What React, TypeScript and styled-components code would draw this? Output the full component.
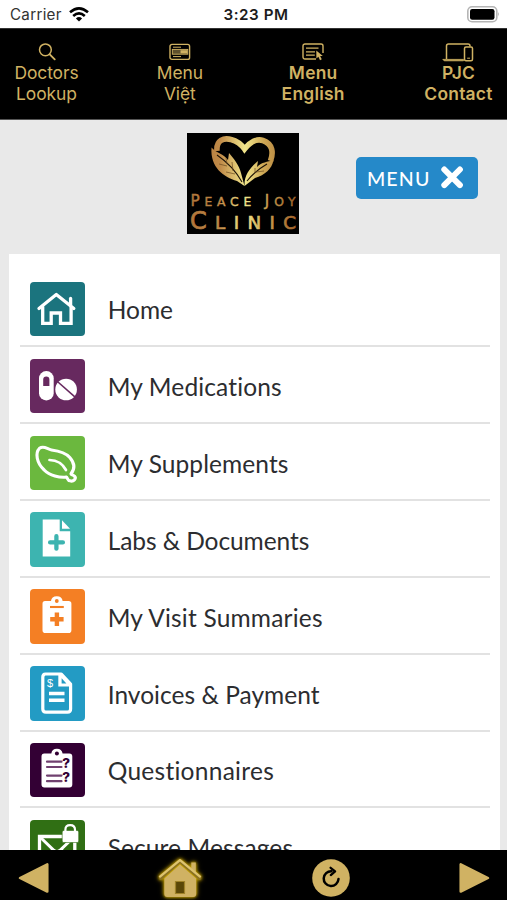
import React from "react";
import styled, { createGlobalStyle } from "styled-components";

const GOLD = "#d0b263";

const GlobalStyle = createGlobalStyle`
  * { box-sizing: border-box; }
  html, body { margin: 0; padding: 0; overflow: hidden; }
  body { background: #e9e9e9; }
  svg { display: block; flex: none; }
`;

const Screen = styled.div`
  width: 507px;
  height: 900px;
  display: flex;
  flex-direction: column;
  overflow: hidden;
  background: #e9e9e9;
  font-family: Lato, sans-serif;
`;

const StatusBar = styled.header`
  flex: none;
  height: 28px;
  padding: 1px 7px 0 10px;
  display: grid;
  grid-template-columns: 1fr auto 1fr;
  align-items: center;
  background: #fff;
  color: #1c1c1c;
  font-family: Inter, sans-serif;
  font-size: 15.2px;
`;

const Carrier = styled.div`
  display: flex;
  align-items: center;
  gap: 7px;
  color: #333;
  letter-spacing: 0.28px;
`;

const Clock = styled.div`
  padding-right: 1px;
  font-weight: 600;
  letter-spacing: 0.55px;
  margin-right: -3px;
`;

const BatterySlot = styled.div`
  display: flex;
  justify-content: flex-end;
`;

const TopNav = styled.nav`
  flex: none;
  height: 92px;
  padding: 14px 14px 0 15px;
  display: flex;
  justify-content: space-between;
  background: #000;
  border-top: 1px solid #333;
  border-bottom: 1px solid #555;
`;

const NavItem = styled.div<{ $width: number; $bold?: boolean }>`
  width: ${(p) => p.$width}px;
  display: flex;
  flex-direction: column;
  align-items: center;
  color: ${GOLD};
  font-family: Inter, sans-serif;
  font-size: 17.4px;
  font-weight: ${(p) => (p.$bold ? 600 : 400)};
  letter-spacing: ${(p) => (p.$bold ? 0.25 : -0.05)}px;
  line-height: 21.3px;
  text-align: center;
  white-space: nowrap;
`;

const NavIcon = styled.div`
  height: 19px;
`;

const Brand = styled.div`
  flex: none;
  height: 134px;
  padding: 13px 29.5px 0 0;
  display: grid;
  grid-template-columns: 186.5px 1fr auto;
  align-items: start;
`;

const LogoCell = styled.div`
  grid-column: 2;
`;

const MenuButton = styled.button`
  width: 121.5px;
  height: 42px;
  margin-top: 24px;
  padding: 0 13.5px 0 11px;
  display: flex;
  align-items: center;
  justify-content: space-between;
  border: 0;
  border-radius: 5px;
  background: #2589c9;
  color: #fff;
  font-family: Lato, sans-serif;
  font-size: 19.6px;
  font-weight: 500;
  letter-spacing: 1.1px;
`;

const Panel = styled.main`
  flex: 1;
  min-height: 0;
  margin: 0 7px 0 9px;
  padding: 16.5px 10.5px 0 11px;
  overflow: hidden;
  background: #fff;
`;

const Row = styled.div`
  height: 76.85px;
  padding: 0 0 9px 10.3px;
  display: flex;
  align-items: flex-end;
  border-bottom: 2px solid #e2e2e2;
`;

const Tile = styled.div<{ $color: string }>`
  width: 54.4px;
  height: 54.4px;
  flex: none;
  border-radius: 4px;
  background: ${(p) => p.$color};
`;

const Label = styled.span<{ $spacing: number }>`
  margin-left: 23px;
  height: 54px;
  line-height: 56px;
  color: #2c2d30;
  font-size: 24.5px;
  letter-spacing: ${(p) => p.$spacing}px;
  white-space: nowrap;
`;

const BottomBar = styled.footer`
  flex: none;
  height: 50px;
  padding: 5px 17px 0 18px;
  display: flex;
  align-items: center;
  justify-content: space-between;
  background: #000;
`;

const Glow = styled.div`
  filter: drop-shadow(0 0 1.5px #c9a400) drop-shadow(0 0 2px #a88a00);
`;

const Wifi = () => (
  <svg width="20" height="15" viewBox="0 0 20 15" fill="none" stroke="#000" strokeWidth="2.6">
    <path d="M1 5.3Q10-2.5 19 5.3" />
    <path d="M4.2 8.9Q10 3.8 15.8 8.9" />
    <path d="M6.9 11.4Q10 8.7 13.1 11.4L10 14.5Z" fill="#000" stroke="none" />
  </svg>
);

const Battery = () => (
  <svg width="33" height="17" viewBox="0 0 33 17">
    <rect x="0.8" y="0.8" width="29" height="15" rx="4.3" fill="#fff" stroke="#b5b5b5" strokeWidth="1.6" />
    <rect x="3" y="3" width="24.5" height="10.8" rx="2.2" fill="#000" />
    <path d="M31.2 6q1.6 2.3 0 4.6Z" fill="#999" />
  </svg>
);

const SearchIcon = () => (
  <svg width="18" height="18" viewBox="0 0 18 18" fill="none" stroke={GOLD} strokeWidth="1.5">
    <circle cx="7.4" cy="6.8" r="5.9" />
    <path d="m11.7 11.3 5 5" strokeWidth="1.9" strokeLinecap="round" />
  </svg>
);

const CardIcon = () => (
  <svg width="22" height="18" viewBox="0 0 22 18" fill="none" stroke={GOLD} strokeWidth="1.4">
    <rect x="1" y="1.4" width="19.6" height="15" rx="2" />
    <rect x="3.3" y="6.4" width="15.5" height="4.8" fill={GOLD} fillOpacity=".45" strokeWidth=".9" />
    <path d="M4 4.2h8M4 13.6h8" strokeWidth="1" />
    <path d="M11.5 8.8h7" strokeWidth="3.2" />
  </svg>
);

const ListCursorIcon = () => (
  <svg width="22" height="18" viewBox="0 0 22 18" fill="none" stroke={GOLD} strokeWidth="1.4">
    <path d="M14 16H3a2 2 0 0 1-2-2V3a2 2 0 0 1 2-2h16a2 2 0 0 1 2 2v7" />
    <path d="M4 5.2h12.5M4 8.8h9M4 12.2h8.8" strokeWidth="1.2" />
    <path d="m14.3 7.6.1 8 2-1.8 1.6 3.4 1.8-.9-1.7-3.2 2.7-.2Z" fill={GOLD} stroke="none" />
  </svg>
);

const DevicesIcon = () => (
  <svg width="32" height="19" viewBox="0 0 32 19" fill="none" stroke={GOLD} strokeWidth="1.5">
    <path d="M4.5 16V3a2 2 0 0 1 2-2H26a2 2 0 0 1 2 2v.4" />
    <path d="M.8 16.4h20.7v1.4H2.2Z" fill={GOLD} strokeWidth=".8" />
    <rect x="22.5" y="3.9" width="8" height="13.8" rx="1.5" />
    <path d="M25.2 15.2h2.8" strokeWidth="1" />
  </svg>
);

const Logo = () => (
  <svg width="112" height="101" viewBox="0 0 112 101">
    <defs>
      <linearGradient id="gold" gradientUnits="userSpaceOnUse" x1="4" x2="108" y1="0" y2="0">
        <stop offset="0" stopColor="#b0753a" />
        <stop offset=".28" stopColor="#c08a48" />
        <stop offset=".52" stopColor="#f2e78c" />
        <stop offset=".7" stopColor="#cda654" />
        <stop offset="1" stopColor="#a3652b" />
      </linearGradient>
    </defs>
    <rect width="112" height="101" fill="#000" />
    <path
      d="M30 18C29 7 37 4.5 44 6.5C50 8 54 11 57.5 16C63 9 70 5.5 76 7.5C86 11 86.5 20 83.5 28"
      fill="none"
      stroke="url(#gold)"
      strokeWidth="5.6"
    />
    <path
      d="M24.5 14.5C29 20 37 21 41 27L42 20C47 26 52 32 54 40L57.5 53L50 48C37 44 23 35 24.5 14.5Z"
      fill="url(#gold)"
    />
    <path
      d="M57.5 53C57 42 63 35 71 28L70 34C75 29 80 29 86.5 27C85 36 78 42 68 45Z"
      fill="url(#gold)"
    />
    <path
      d="M30 22Q46 33 55 49M60 48Q68 38 80 31"
      fill="none"
      stroke="#1c1206"
      strokeWidth="1.1"
    />
    <path
      d="M40 31l-1-6M46 38l-1-9M40 33l-8-2M48 41l-9-2M68 40v-5M69 39l8-1"
      fill="none"
      stroke="#6b4a20"
      strokeWidth=".7"
    />
    <g fill="url(#gold)" stroke="url(#gold)" strokeWidth=".4" fontFamily="DejaVu Sans, sans-serif">
      <text y="73" textLength="105" lengthAdjust="spacing" x="3.5" fontSize="12.3">
        <tspan fontSize="15.2">P</tspan>EACE <tspan fontSize="15.2">J</tspan>OY
      </text>
      <text y="96" textLength="106" lengthAdjust="spacing" x="3" fontSize="18.3" strokeWidth=".7">
        <tspan fontSize="24">C</tspan>LINIC
      </text>
    </g>
  </svg>
);

const CloseIcon = () => (
  <svg width="24" height="24" viewBox="0 0 24 24" stroke="#fff" strokeWidth="6" strokeLinecap="round">
    <path d="m4.3 3.5 15.6 15.6M19.9 3.5 4.3 19.1" />
  </svg>
);

const TileSvg = ({ children }: { children: React.ReactNode }) => (
  <svg width="54" height="54" viewBox="0 0 54 54" fill="none">
    {children}
  </svg>
);

const HomeGlyph = () => (
  <TileSvg>
    <g stroke="#fff" strokeWidth="3.3" strokeLinejoin="round" strokeLinecap="round">
      <path d="m9 26.5 17.3-14 17.5 14" />
      <path d="M12.7 25v16.4h8.5V31h9.3v10.4h10.6V25" strokeLinejoin="miter" />
      <path d="M40.6 16.5v6" />
    </g>
  </TileSvg>
);

const PillsGlyph = () => (
  <TileSvg>
    <rect x="9" y="12" width="14.7" height="29.5" rx="7.3" fill="#fff" />
    <path d="M13.2 27v-6.3a3 3 0 0 1 6.2 0V27Z" fill="#67295f" />
    <circle cx="36.1" cy="30.5" r="10.8" fill="#fff" />
    <path d="m27.4 22.5 18 15.8" stroke="#67295f" strokeWidth="1.6" />
  </TileSvg>
);

const LeafGlyph = () => (
  <TileSvg>
    <g stroke="#fff" strokeWidth="3.1" strokeLinecap="round" strokeLinejoin="round">
      <path d="M9.5 12.3C5 17 6.5 27 14.2 34C19.5 39.5 30 42 36.2 41.1C37.8 41.6 37.2 44.8 40 44.8C43.5 46 46.8 42.5 44.5 40.2C43.5 39 41.6 39.2 41 37.8C45 33 44.5 27 39.8 21.5C35 16 27.5 14.8 21.5 14C17 13.3 14 9 9.5 12.3Z" />
      <path d="M19.5 24C27 24.3 32 26.5 36 34" strokeWidth="2.7" />
    </g>
  </TileSvg>
);

const DocumentGlyph = () => (
  <TileSvg>
    <path d="M12.7 7.5h17v11.8h10.5v25.2H12.7Z" fill="#fff" />
    <path d="M32 8.3 40 16.8H32Z" fill="#fff" />
    <path d="M26.4 24.2v12.5M20.1 30.4h12.8" stroke="#3db4b0" strokeWidth="4.3" strokeLinecap="round" />
  </TileSvg>
);

const ClipboardPlusGlyph = () => (
  <TileSvg>
    <path d="M15 12h6q.5-4.8 5.8-4.8T32.6 12h6q2.8 0 2.8 2.8v26.5q0 2.8-2.8 2.8H15.3q-2.8 0-2.8-2.8V14.8q0-2.8 2.5-2.8Z" fill="#fff" />
    <circle cx="26.8" cy="12" r="1.9" fill="#f47f24" />
    <path d="M20 18h13.8" stroke="#f47f24" strokeWidth="2.1" />
    <path d="M26.9 23.6V37M20.2 30.3h13.4" stroke="#f47f24" strokeWidth="4.4" />
  </TileSvg>
);

const InvoiceGlyph = () => (
  <TileSvg>
    <path d="M15.5 8h15.8l9.3 10.2v24.7q0 3.2-3.2 3.2H16q-3.2 0-3.2-3.2V11.3q0-3.3 2.7-3.3Z" stroke="#fff" strokeWidth="3.2" strokeLinejoin="round" />
    <path d="M28.3 8h3l9.2 10.2v2.4H28.3Z" fill="#fff" />
    <path d="m31.6 12.2 4.8 5.3h-4.8Z" fill="#239bc4" />
    <path d="M19 27.5h15.5M19 34.2h15.5" stroke="#fff" strokeWidth="3.4" />
    <text x="17" y="20.7" fill="#fff" fontFamily="Liberation Sans, sans-serif" fontSize="11">$</text>
  </TileSvg>
);

const QuestionsGlyph = () => (
  <TileSvg>
    <path d="M14.3 10.4h7q.6-4.7 5.6-4.7t5.7 4.7h6.7q3 0 3 3v28.2q0 3-3 3H14.5q-3 0-3-3V13.4q0-3 2.8-3Z" fill="#fff" />
    <circle cx="26.9" cy="10.4" r="2" fill="#330034" />
    <path d="M17 18.7h14.5M17 24h14.5M17 32.6h14.5M17 38.2h14.5" stroke="#70406f" strokeWidth="2.2" strokeLinecap="round" />
    <g fill="#330034" fontFamily="Inter, sans-serif" fontSize="13.5" fontWeight="800">
      <text x="32.3" y="24.8">?</text>
      <text x="32.3" y="39.3">?</text>
    </g>
  </TileSvg>
);

const SecureMailGlyph = () => (
  <TileSvg>
    <path d="M9.5 16.5h35.3v27H9.5Z" stroke="#fff" strokeWidth="3.3" />
    <path d="m10 17 13.8 13.3q3.1 2.4 6.2 0L44 17M10 43l12.5-13M44 43 31.5 30" stroke="#fff" strokeWidth="3" />
    <rect x="32.2" y="10.5" width="16.5" height="12" rx="1.5" fill="#fff" stroke="#306f14" strokeWidth=".6" />
    <path d="M35.4 11.5V9.8q0-4.7 4.8-4.7T45 9.8v1.7" stroke="#fff" strokeWidth="2.2" />
  </TileSvg>
);

const BackIcon = () => (
  <svg width="31" height="32" viewBox="0 0 31 32">
    <path d="M2 16 29.3 2.3v27.3Z" fill={GOLD} stroke={GOLD} strokeWidth="2.5" strokeLinejoin="round" />
  </svg>
);

const ForwardIcon = () => (
  <svg width="31" height="32" viewBox="0 0 31 32">
    <path d="M29 16 1.7 2.3v27.3Z" fill={GOLD} stroke={GOLD} strokeWidth="2.5" strokeLinejoin="round" />
  </svg>
);

const HouseIcon = () => (
  <svg width="44" height="40" viewBox="0 0 44 40">
    <path d="M6.3 20.5 22 6.5l16.2 14V36q0 3-3 3H9.3q-3 0-3-3Z" fill={GOLD} />
    <path d="M33.3 4.5h4.5v12l-4.5-4Z" fill={GOLD} />
    <path d="M2.6 20.2 22 3.4l19.6 16.8" fill="none" stroke="#8b7220" strokeWidth="3.2" strokeLinejoin="round" strokeLinecap="round" />
    <path d="M2 18.6 22 2.2l20 16.4" fill="none" stroke="#ddc36f" strokeWidth="2.3" strokeLinejoin="round" strokeLinecap="round" />
    <path d="M17.5 23.5h9v12h-9Z" fill="#5b4707" stroke="#9f8228" strokeWidth="1.2" />
  </svg>
);

const RefreshIcon = () => (
  <svg width="38" height="38" viewBox="0 0 38 38">
    <circle cx="19" cy="19" r="18.8" fill={GOLD} />
    <path d="M19.5 12.2A7.4 7.4 0 1 0 26.5 20" fill="none" stroke="#000" strokeWidth="2.5" strokeLinecap="round" />
    <path d="m18.6 8.8 4.5 3.5-4.3 3.8" fill="none" stroke="#000" strokeWidth="2.3" strokeLinejoin="round" strokeLinecap="round" />
  </svg>
);

const entries = [
  { label: "Home", color: "#1b747e", Glyph: HomeGlyph, spacing: 0 },
  { label: "My Medications", color: "#67295f", Glyph: PillsGlyph, spacing: 0.13 },
  { label: "My Supplements", color: "#6bb83e", Glyph: LeafGlyph, spacing: 0.08 },
  { label: "Labs & Documents", color: "#3db4b0", Glyph: DocumentGlyph, spacing: -0.08 },
  { label: "My Visit Summaries", color: "#f47f24", Glyph: ClipboardPlusGlyph, spacing: 0.2 },
  { label: "Invoices & Payment", color: "#239bc4", Glyph: InvoiceGlyph, spacing: 0.03 },
  { label: "Questionnaires", color: "#330034", Glyph: QuestionsGlyph, spacing: 0.27 },
  { label: "Secure Messages", color: "#306f14", Glyph: SecureMailGlyph, spacing: 0.1 },
];

export default function App() {
  return (
    <>
      <GlobalStyle />
      <Screen>
        <StatusBar>
          <Carrier>
            Carrier
            <Wifi />
          </Carrier>
          <Clock>3:23 PM</Clock>
          <BatterySlot>
            <Battery />
          </BatterySlot>
        </StatusBar>
        <TopNav>
          <NavItem $width={63}>
            <NavIcon><SearchIcon /></NavIcon>
            <span>Doctors</span>
            <span>Lookup</span>
          </NavItem>
          <NavItem $width={45}>
            <NavIcon><CardIcon /></NavIcon>
            <span>Menu</span>
            <span>Việt</span>
          </NavItem>
          <NavItem $width={63} $bold>
            <NavIcon><ListCursorIcon /></NavIcon>
            <span>Menu</span>
            <span>English</span>
          </NavItem>
          <NavItem $width={69} $bold>
            <NavIcon><DevicesIcon /></NavIcon>
            <span>PJC</span>
            <span>Contact</span>
          </NavItem>
        </TopNav>
        <Brand>
          <LogoCell><Logo /></LogoCell>
          <MenuButton>
            <span>MENU</span>
            <CloseIcon />
          </MenuButton>
        </Brand>
        <Panel>
          {entries.map(({ label, color, Glyph, spacing }) => (
            <Row key={label}>
              <Tile $color={color}><Glyph /></Tile>
              <Label $spacing={spacing}>{label}</Label>
            </Row>
          ))}
        </Panel>
        <BottomBar>
          <BackIcon />
          <Glow><HouseIcon /></Glow>
          <RefreshIcon />
          <ForwardIcon />
        </BottomBar>
      </Screen>
    </>
  );
}
